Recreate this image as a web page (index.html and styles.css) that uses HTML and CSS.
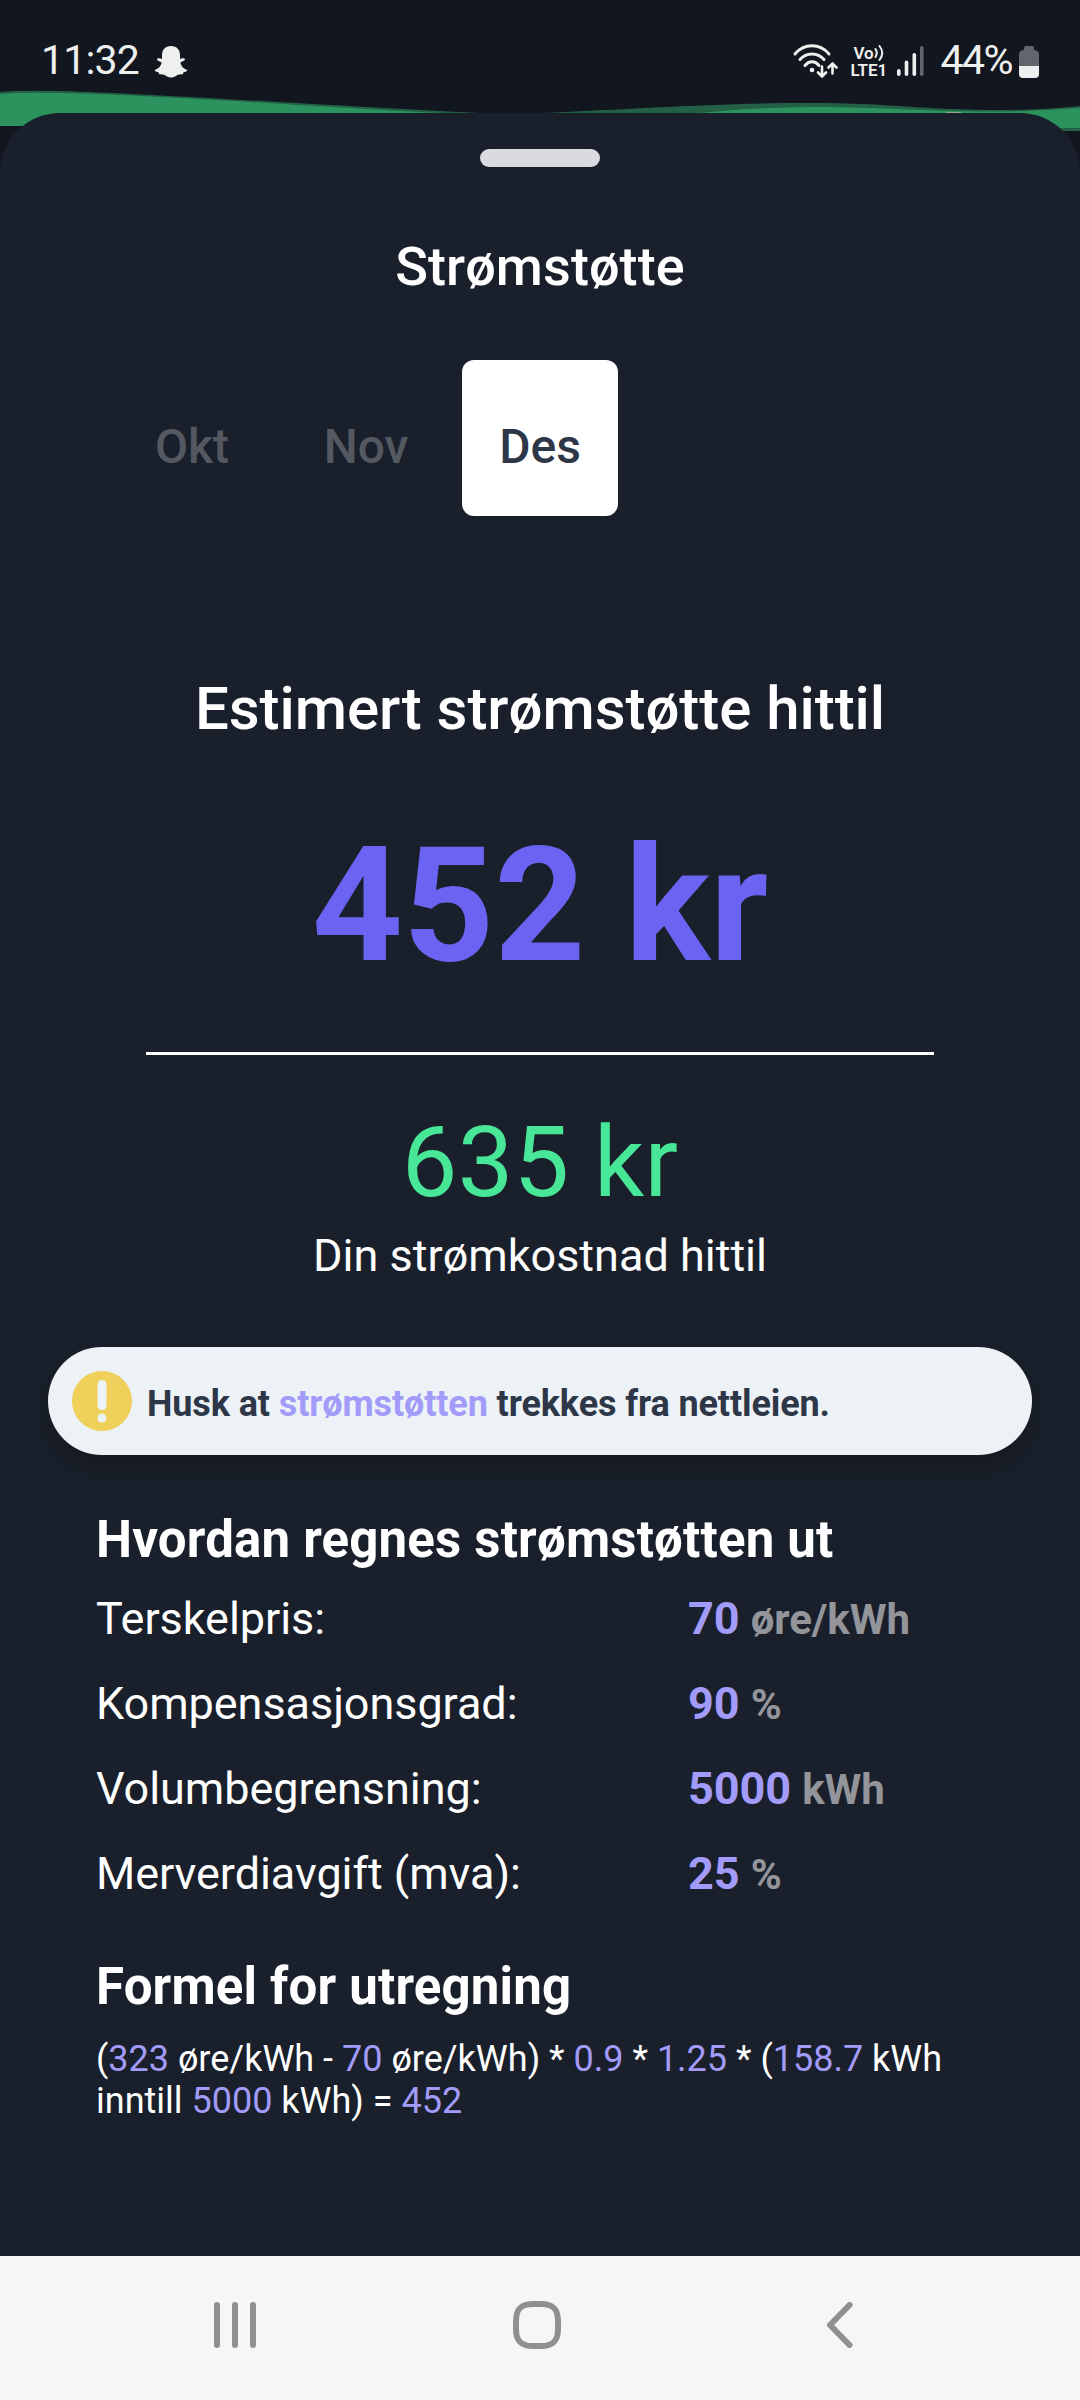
FILE: index.html
```html
<!DOCTYPE html>
<html lang="nb">
<head>
    <meta charset="UTF-8">
    <meta name="viewport" content="width=device-width, initial-scale=1.0">
    <title>Strømstøtte</title>
    <link rel="stylesheet" href="styles.css">
</head>
<body>
    <svg class="wave" width="1080" height="180" viewBox="0 0 1080 180">
        <path fill="#236045" d="M0 92 Q20 90 60 91 C160 94 350 107 478 113 L540 113 C640 109 710 103 810 103 C890 103 920 110 1005 110 Q1040 110 1080 106 V131 H0 Z"/>
        <path fill="#2c935f" d="M0 94 Q20 92 60 93 C160 95 350 109 440 113 L700 113 C740 109 770 107.500 815 107 C880 107 930 112 1000 111.500 Q1040 111 1080 108 V128 H1060 Q1020 129 980 129 H0 Z"/>
        <path fill="#12161f" d="M0 126 H1000 V131 H1080 V180 H0 Z"/>
        <rect fill="#8ea58f" x="946" y="112" width="15" height="1"/>
    </svg>

    <header class="status-bar">
        <span class="clock">11:32</span>
        <svg class="snap" width="34" height="32" viewBox="0 0 34 32">
            <path fill="#eeefef" d="M17 0C23 0 26 4 26 9V13C27 12.500 30 11.500 31 13C31.500 14.500 28 15.500 26.500 16.500C26.500 19 29 22.500 33 24C34 24.500 33 25.500 29.500 26.200C29 27 29.500 28 28.500 28.200C26.500 28.500 24.500 28 22.500 29.500C20.500 31 18.500 31.500 17 31.500C15.500 31.500 13.500 31 11.500 29.500C9.500 28 7.500 28.500 5.500 28.200C4.500 28 5 27 4.500 26.200C1 25.500 0 24.500 1 24C5 22.500 7.500 19 7.500 16.500C6 15.500 2.500 14.500 3 13C4 11.500 7 12.500 8 13V9C8 4 11 0 17 0Z"/>
        </svg>
        <div class="status-right">
            <svg class="wifi" width="46" height="36" viewBox="0 0 46 36" fill="none" stroke="#eeefef" stroke-width="3" stroke-linecap="round">
                <path d="M3 12C12 1 28 1 37 12"/>
                <path d="M8 17.500C14.500 10 25.500 10 32 17.500"/>
                <path d="M13 23.500C17 18.500 23 18.500 27 23.500"/>
                <circle cx="20" cy="28" r="2.300" fill="#eeefef" stroke="none"/>
                <path d="M30 24.500V34M26 30.500L30 34.500L34 30.500M40.500 31.500V22M36.500 25.500L40.500 21.500L44.500 25.500" stroke-width="2.600"/>
            </svg>
            <div class="volte">
                <div class="volte-top">Vo<svg width="10" height="16" viewBox="0 0 10 16" fill="none" stroke="#eeefef" stroke-width="2" stroke-linecap="round"><path d="M1.500 4Q4 8 1.500 12M5.500 1Q11 8 5.500 15"/></svg></div>
                <div>LTE1</div>
            </div>
            <svg class="signal" width="28" height="30" viewBox="0 0 28 30">
                <rect x="0" y="23" width="3.600" height="7" rx="1.800" fill="#eeefef"/>
                <rect x="7.700" y="14.500" width="3.600" height="15.500" rx="1.800" fill="#eeefef"/>
                <rect x="15.500" y="7" width="3.600" height="23" rx="1.800" fill="#eeefef"/>
                <rect x="23" y="0" width="3.600" height="30" rx="1.800" fill="#62656c"/>
            </svg>
            <span class="percent">44%</span>
            <svg class="battery" width="20" height="32" viewBox="0 0 20 32">
                <path fill="#62656c" d="M5 2Q5 0 7 0H13Q15 0 15 2V4H16Q20 5 20 8V20H0V8Q0 5 4 4H5Z"/>
                <path fill="#eeefef" d="M0 20H20V28Q20 32 16 32H4Q0 32 0 28Z"/>
            </svg>
        </div>
    </header>

    <main class="sheet">
        <div class="handle"></div>
        <h1 class="title">Strømstøtte</h1>

        <div class="months">
            <div class="month">Okt</div>
            <div class="month">Nov</div>
            <div class="month active">Des</div>
        </div>

        <h2 class="estimate-label">Estimert strømstøtte hittil</h2>
        <div class="estimate">452 kr</div>
        <div class="divider"></div>
        <div class="cost">635 kr</div>
        <div class="cost-label">Din strømkostnad hittil</div>

        <div class="notice">
            <svg width="60" height="60" viewBox="0 0 60 60">
                <circle cx="30" cy="30" r="30" fill="#efd05a"/>
                <rect x="25.500" y="9" width="9" height="30" rx="4.500" fill="#edf2f7"/>
                <circle cx="30" cy="47" r="4.500" fill="#edf2f7"/>
            </svg>
            <p>Husk at <span class="accent">strømstøtten</span> trekkes fra nettleien.</p>
        </div>

        <section class="details">
            <h3>Hvordan regnes strømstøtten ut</h3>
            <div class="row">
                <span>Terskelpris:</span>
                <span class="value">70 <small>øre/kWh</small></span>
            </div>
            <div class="row">
                <span>Kompensasjonsgrad:</span>
                <span class="value">90 <small>%</small></span>
            </div>
            <div class="row">
                <span>Volumbegrensning:</span>
                <span class="value">5000 <small>kWh</small></span>
            </div>
            <div class="row">
                <span>Merverdiavgift (mva):</span>
                <span class="value">25 <small>%</small></span>
            </div>

            <h3 class="formula-title">Formel for utregning</h3>
            <p class="formula">(<span class="accent">323</span> øre/kWh - <span class="accent">70</span> øre/kWh) * <span class="accent">0.9</span> * <span class="accent">1.25</span> * (<span class="accent">158.7</span> kWh<br>inntill <span class="accent">5000</span> kWh) = <span class="accent">452</span></p>
        </section>
    </main>

    <nav class="nav-bar">
        <svg width="42" height="46" viewBox="0 0 42 46" fill="#909090">
            <rect x="0" y="0" width="6" height="46" rx="3"/>
            <rect x="18" y="0" width="6" height="46" rx="3"/>
            <rect x="36" y="0" width="6" height="46" rx="3"/>
        </svg>
        <svg class="home" width="48" height="48" viewBox="0 0 48 48" fill="none" stroke="#909090" stroke-width="6">
            <path d="M3 24V20C3 8 8 3 20 3H28C40 3 45 8 45 20V28C45 40 40 45 28 45H20C8 45 3 40 3 28Z"/>
        </svg>
        <svg class="back" width="27" height="46" viewBox="0 0 27 46" fill="none" stroke="#909090" stroke-width="6" stroke-linecap="round" stroke-linejoin="round">
            <path d="M23.500 3L4 23L23.500 43"/>
        </svg>
    </nav>
</body>
</html>
```

FILE: styles.css
```css
* {
    box-sizing: border-box;
    margin: 0;
    padding: 0;
}
body {
    width: 1080px;
    height: 2400px;
    display: flex;
    flex-direction: column;
    position: relative;
    font-family: Roboto, sans-serif;
    background-color: #12161f;
    color: #fff;
    overflow: hidden;
}
svg {
    display: block;
    flex-shrink: 0;
}
/* green chart showing behind the sheet */
.wave {
    position: absolute;
    top: 0;
    left: 0;
    z-index: -1;
}
.status-bar {
    height: 113px;
    display: flex;
    align-items: flex-start;
    padding: 36px 41px 0 41px;
    color: #eeefef;
    font-size: 41px;
    line-height: 48px;
    flex-shrink: 0;
}
.clock {
    width: 113px;
    letter-spacing: -0.8px;
}
.snap {
    margin-top: 10px;
}
.status-right {
    margin-left: auto;
    display: flex;
    align-items: flex-start;
}
.wifi {
    margin: 6px 12px 0 0;
}
.volte {
    width: 37px;
    margin: 9px 10px 0 0;
    font-size: 17px;
    font-weight: 600;
    line-height: 17px;
}
.volte-top {
    display: flex;
    padding-left: 3px;
}
.signal {
    margin: 10px 15px 0 0;
}
.percent {
    letter-spacing: -1.5px;
    margin-right: 7px;
}
.battery {
    margin-top: 10px;
}
.sheet {
    flex: 1;
    display: flex;
    flex-direction: column;
    align-items: center;
    padding-top: 36px;
    background-color: #1a202b;
    border-radius: 60px 60px 0 0;
}
.handle {
    width: 120px;
    height: 18px;
    border-radius: 9px;
    background-color: #dadbe0;
}
.title {
    margin-top: 68px;
    font-size: 54px;
    font-weight: 500;
    line-height: 64px;
    letter-spacing: 0.1px;
}
.months {
    align-self: stretch;
    display: flex;
    gap: 18px;
    margin-top: 61px;
    padding-left: 114px;
}
.month {
    width: 156px;
    height: 156px;
    padding-top: 17px;
    border-radius: 12px;
    text-align: center;
    font-size: 48px;
    font-weight: 500;
    line-height: 140px;
    color: #535861;
}
.month.active {
    background-color: #fff;
    color: #2d3748;
}
.estimate-label {
    margin-top: 158px;
    font-size: 60px;
    font-weight: 500;
    line-height: 70px;
    letter-spacing: -0.04px;
}
.estimate {
    margin-top: 68px;
    font-size: 159px;
    font-weight: 700;
    line-height: 188px;
    color: #6b63f1;
}
.divider {
    width: 788px;
    height: 3px;
    margin-top: 52px;
    background-color: #fff;
}
.cost {
    margin-top: 49px;
    font-size: 99px;
    line-height: 116px;
    letter-spacing: 0.2px;
    color: #48e797;
}
.cost-label {
    margin-top: 9px;
    font-size: 45px;
    line-height: 54px;
}
.notice {
    width: 984px;
    height: 108px;
    display: flex;
    align-items: center;
    gap: 15px;
    margin-top: 64px;
    padding: 0 24px;
    border-radius: 54px;
    background-color: #edf2f7;
    box-shadow: 0 12px 24px rgba(0, 0, 0, 0.22);
    color: #2d3748;
    font-size: 36px;
    font-weight: 700;
    letter-spacing: -0.11px;
}
.notice p {
    padding-top: 5px;
}
.accent {
    color: #a29bfa;
}
.details {
    align-self: stretch;
    margin-top: 55px;
    padding: 0 96px;
}
.details h3 {
    font-size: 51px;
    font-weight: 700;
    line-height: 60px;
    letter-spacing: 0.18px;
    margin-bottom: 6px;
}
.row {
    display: grid;
    grid-template-columns: 592px 1fr;
    font-size: 45px;
    line-height: 85px;
    letter-spacing: -0.06px;
}
.value {
    font-weight: 700;
    color: #a29bfa;
}
.value small {
    font-size: 42px;
    line-height: 1;
    color: #93959b;
}
.details .formula-title {
    margin-top: 41px;
    margin-bottom: 21px;
}
.formula {
    font-size: 36px;
    line-height: 42px;
    white-space: nowrap;
}
.nav-bar {
    height: 144px;
    display: flex;
    align-items: center;
    padding: 0 0 6px 214px;
    background-color: #f6f6f6;
    flex-shrink: 0;
}
.home {
    margin-left: 257px;
}
.back {
    margin-left: 265px;
}
```
